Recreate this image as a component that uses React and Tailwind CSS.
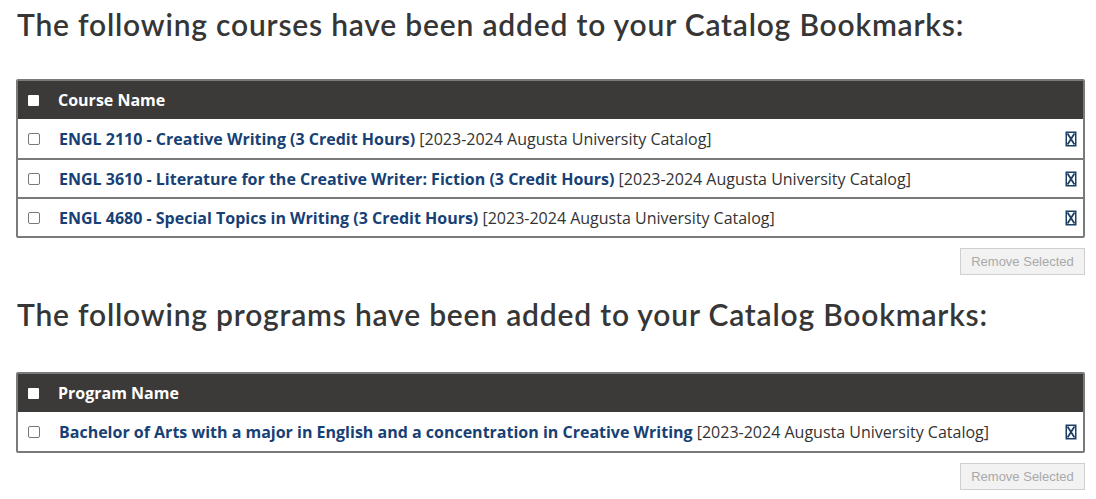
import React from "react";

function DelIcon() {
  return (
    <svg width="12" height="16" viewBox="0 0 12 16" className="shrink-0">
      <rect x="0.5" y="0.5" width="11" height="15" fill="#1c3f66" />
      <rect x="2" y="2" width="8" height="12" fill="#ffffff" />
      <path d="M2.5 2.5 L9.5 13.5 M9.5 2.5 L2.5 13.5" stroke="#1c3f66" strokeWidth="1.8" />
    </svg>
  );
}

function Box({ header }) {
  return (
    <span
      className={
        header
          ? "inline-block w-[11px] h-[11px] bg-white rounded-[1px] shrink-0"
          : "inline-block w-[12px] h-[12px] bg-white border border-[#777] rounded-[2px] shrink-0"
      }
    />
  );
}

function Table({ title, rows, mt }) {
  return (
    <div className={"border-2 border-[#7a7a7a] rounded-[2px] ml-[16px] mr-[11px] " + mt}>
      <div className="h-[38px] bg-[#3c3a38] flex items-center pl-[10px] gap-[19px]">
        <Box header />
        <span className="text-white font-bold text-[16px]" style={{ fontFamily: '"Open Sans", sans-serif' }}>{title}</span>
      </div>
      {rows.map((r, i) => (
        <div
          key={i}
          className={"h-[39px] flex items-center pl-[10px] pr-[6px] gap-[19px] bg-white " + (i > 0 ? "border-t-2 border-[#7a7a7a]" : "")}
        >
          <Box />
          <div className="flex-1 text-[16px] text-[#333]" style={{ fontFamily: '"Open Sans", sans-serif' }}>
            <span className="font-bold text-[#174175]">{r}</span> [2023-2024 Augusta University Catalog]
          </div>
          <DelIcon />
        </div>
      ))}
    </div>
  );
}

function Btn() {
  return (
    <div className="flex justify-end mr-[11px] mt-[10px]">
      <div
        className="w-[125px] h-[27px] bg-[#f2f2f2] border border-[#cfcfcf] text-[#a9a9a9] text-[13px] flex items-center justify-center"
        style={{ fontFamily: '"Liberation Sans", Arial, sans-serif' }}
      >
        Remove Selected
      </div>
    </div>
  );
}

export default function App() {
  const heading = "text-[30px] text-[#363636] font-semibold pl-[17px] leading-[36px] tracking-[0.8px]";
  const hf = { fontFamily: 'Lato, "Noto Sans", sans-serif' };
  return (
    <div className="w-[1096px] h-[499px] bg-white overflow-hidden">
      <h1 className={heading + " pt-[6px]"} style={hf}>The following courses have been added to your Catalog Bookmarks:</h1>
      <Table
        mt="mt-[37px]"
        title="Course Name"
        rows={[
          "ENGL 2110 - Creative Writing (3 Credit Hours)",
          "ENGL 3610 - Literature for the Creative Writer: Fiction (3 Credit Hours)",
          "ENGL 4680 - Special Topics in Writing (3 Credit Hours)",
        ]}
      />
      <Btn />
      <h1 className={heading + " mt-[21px]"} style={hf}>The following programs have been added to your Catalog Bookmarks:</h1>
      <Table mt="mt-[40px]" title="Program Name" rows={["Bachelor of Arts with a major in English and a concentration in Creative Writing"]} />
      <Btn />
    </div>
  );
}
